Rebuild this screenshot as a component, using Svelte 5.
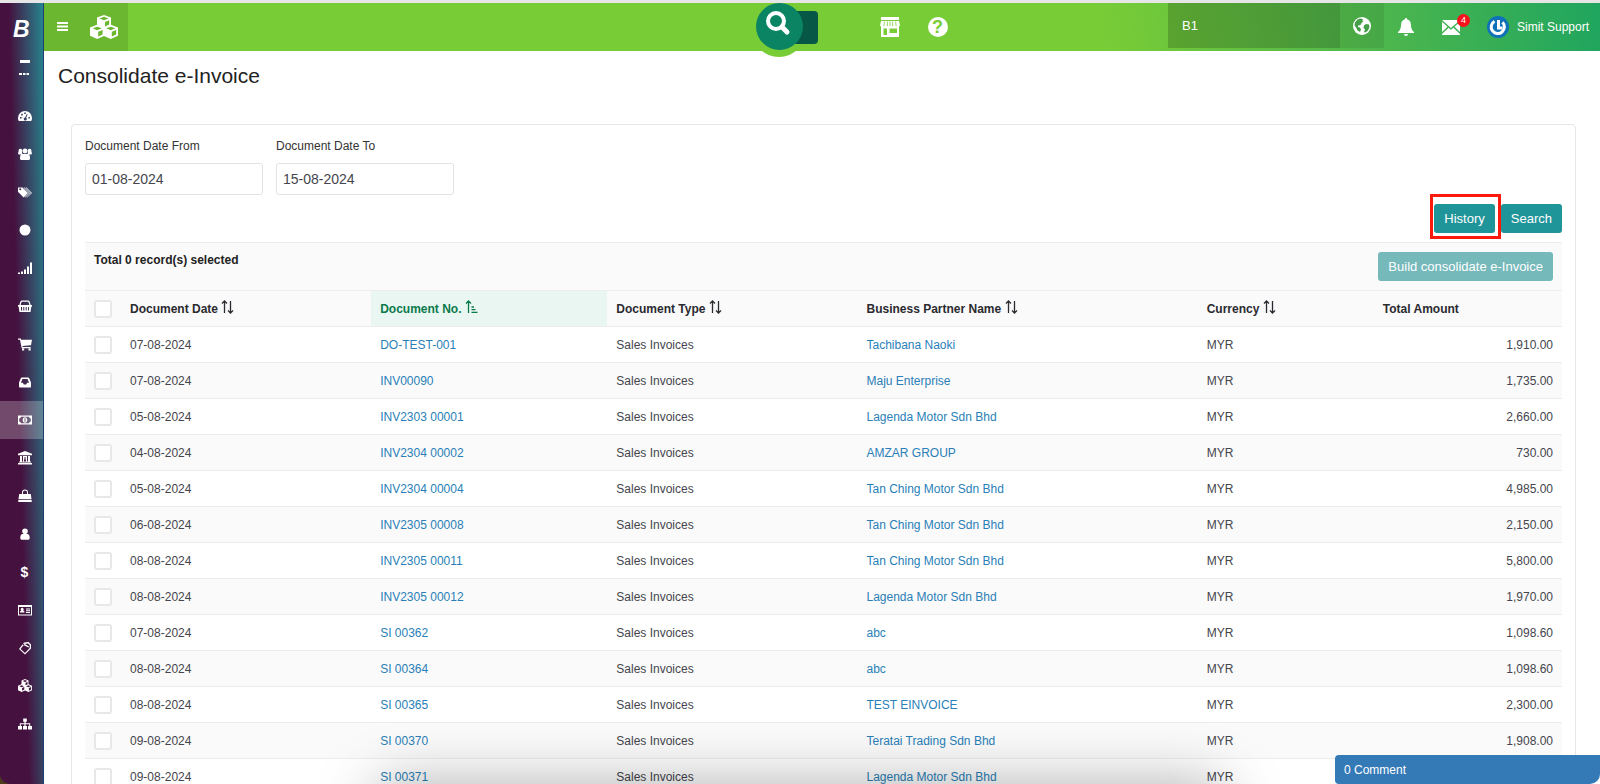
<script lang="ts">
  interface Invoice {
    date: string;
    no: string;
    partner: string;
    amount: string;
  }

  interface Column {
    label: string;
    width: number;
    sort: "none" | "both" | "asc";
  }

  let dateFrom: string = "01-08-2024";
  let dateTo: string = "15-08-2024";
  let branch: string = "B1";
  let selected: string[] = [];

  const columns: Column[] = [
    { label: "Document Date", width: 250, sort: "both" },
    { label: "Document No.", width: 236, sort: "asc" },
    { label: "Document Type", width: 250, sort: "both" },
    { label: "Business Partner Name", width: 340, sort: "both" },
    { label: "Currency", width: 176, sort: "both" },
    { label: "Total Amount", width: 188, sort: "none" },
  ];

  const invoices: Invoice[] = [
    { date: "07-08-2024", no: "DO-TEST-001", partner: "Tachibana Naoki", amount: "1,910.00" },
    { date: "07-08-2024", no: "INV00090", partner: "Maju Enterprise", amount: "1,735.00" },
    { date: "05-08-2024", no: "INV2303 00001", partner: "Lagenda Motor Sdn Bhd", amount: "2,660.00" },
    { date: "04-08-2024", no: "INV2304 00002", partner: "AMZAR GROUP", amount: "730.00" },
    { date: "05-08-2024", no: "INV2304 00004", partner: "Tan Ching Motor Sdn Bhd", amount: "4,985.00" },
    { date: "06-08-2024", no: "INV2305 00008", partner: "Tan Ching Motor Sdn Bhd", amount: "2,150.00" },
    { date: "08-08-2024", no: "INV2305 00011", partner: "Tan Ching Motor Sdn Bhd", amount: "5,800.00" },
    { date: "08-08-2024", no: "INV2305 00012", partner: "Lagenda Motor Sdn Bhd", amount: "1,970.00" },
    { date: "07-08-2024", no: "SI 00362", partner: "abc", amount: "1,098.60" },
    { date: "08-08-2024", no: "SI 00364", partner: "abc", amount: "1,098.60" },
    { date: "08-08-2024", no: "SI 00365", partner: "TEST EINVOICE", amount: "2,300.00" },
    { date: "09-08-2024", no: "SI 00370", partner: "Teratai Trading Sdn Bhd", amount: "1,908.00" },
    { date: "09-08-2024", no: "SI 00371", partner: "Lagenda Motor Sdn Bhd", amount: "" },
  ];

  const cubes =
    "M7 0l3.500 1.400v3.900l3.500 1.500v4.400l-3.600 1.800L7 11.400 3.600 13 0 11.200V6.800l3.500-1.500V1.400zM7 1L4.700 1.900 7 2.900l2.300-1zM7.500 3.800v2.400l2.100-1V2.900zM3.600 6.300L1.300 7.200l2.300 1 2.300-1zM4.100 9.100v2.600L6.300 10.600V8.100zM10.400 6.300l-2.300.9 2.300 1 2.300-1zM10.900 9.100v2.600l2.200-1.100V8.100z";

  // 14x14 glyphs, cut-outs come from the even-odd fill
  const menu = [
    { name: "Dashboard", d: "M7 2a7 7 0 0 0-7 7c0 1.200.3 2.200.8 3h12.400c.5-.8.8-1.800.8-3a7 7 0 0 0-7-7zM2 8h1.600v1.600H2zM3.200 4.800h1.600v1.600H3.200zM6.200 3.400h1.600V5H6.200zM10.400 8H12v1.600h-1.600zM8.600 5.200l1 .4-1.400 3.200a1.500 1.500 0 1 1-1-.3z" },
    { name: "Partners", d: "M4.500 4a2.500 2.500 0 1 1 5 0 2.500 2.500 0 0 1-5 0zM.7 3a1.800 1.800 0 1 1 3.300 1.500C4 5.500 4.300 6 4.600 6.500L3 7.500H.8C-.2 7 0 5.500.5 5zM13.300 3A1.800 1.800 0 1 0 10 4.500c0 1-.3 1.500-.6 2l1.600 1h2.200c1-.5.8-2 .3-2.500zM4.500 7h5c2 0 2.500 2 2.500 4s-.8 2-2 2H4c-1.200 0-2 0-2-2s.5-4 2.500-4z" },
    { name: "Tags", d: "M0 2.500v4.300L5.600 12.400 10 8 4.500 2.500zM1.200 4.200a1 1 0 1 1 2 0 1 1 0 0 1-2 0zM5.500 2.500L11 8l-4.300 4.300.6.200L12 8 6.500 2.500zM7.500 2.500L13 8l-4.500 4.500h.7L14 8 8.500 2.500z" },
    { name: "Items", d: "M7 1.500a5.500 5.500 0 1 1 0 11 5.500 5.500 0 0 1 0-11z" },
    { name: "Reports", d: "M0 11.500h2V13H0zM3 10.500h2V13H3zM6 8.500h2V13H6zM9 5.500h2V13H9zM12 1.500h2V13h-2z" },
    { name: "Purchase", d: "M4.500 1.500h5c1.500 0 2 .5 2.400 1.800l.7 2.700H14v1.500h-.6L12.500 13h-11L.6 7.500H0V6h1.400l.7-2.700C2.500 2 3 1.500 4.500 1.500zM4.500 2.700c-.8 0-1 .3-1.200 1L2.700 6h8.600l-.6-2.300c-.2-.7-.4-1-1.200-1zM3 8v3.500h1V8zM5.300 8v3.500h1V8zM7.700 8v3.500h1V8zM10 8v3.500h1V8z" },
    { name: "Sales", d: "M0 1.500h2.800l.4 1.300H14l-1 5.400-8.600.8.300 1h8v1.200h-9L2 2.800H0zM4 11.500h2.200v2H4zM10.500 11.500h2.200v2h-2.200z" },
    { name: "Inbox", d: "M4 2.500h6c.7 0 1 .3 1.300 1l1.700 4v4.200c0 .5-.3.800-.8.800H1.800c-.5 0-.8-.3-.8-.8V7.500l1.700-4c.3-.7.6-1 1.300-1zM4.500 4L2.900 7.800h2l.9 1.600h2.400l.9-1.600h2L9.500 4z" },
    { name: "Cash", d: "M0 2.500h14v9H0zM3 3.700A2 2 0 0 1 1.200 5.500v3A2 2 0 0 1 3 10.300h8a2 2 0 0 1 1.800-1.800v-3A2 2 0 0 1 11 3.700zM7 4.200c1.500 0 2.300 1.300 2.300 2.800S8.500 9.800 7 9.800 4.700 8.500 4.700 7 5.500 4.200 7 4.200zM6.500 5.300v3.400h1V5.300z" },
    { name: "Bank", d: "M7 0l7 2.800v1.400H0V2.800zM2 5h2v5.500h1V5h4v5.500h1V5h2v5.500h1v1H1v-1h1zM6.500 6v1.500l-.7 3h2.400l-.7-3V6zM0 12h14v1.500H0z" },
    { name: "Stock", d: "M4 5V3.500a3 3 0 0 1 6 0V5h2.800l.7 5H.5l.7-5zM5 5h4V3.500a2 2 0 0 0-4 0zM.4 10.700h13.200l.2 2.300H.2z" },
    { name: "Employees", d: "M4.200 4.200a2.800 2.800 0 1 1 5.600 0 2.800 2.800 0 0 1-5.600 0zM4.300 7h5.400c1.600.4 2 2.200 2 4 0 1.200-.6 1.800-1.700 1.800H4c-1.100 0-1.700-.6-1.700-1.800 0-1.800.4-3.600 2-4z" },
    { name: "Payroll", d: "" },
    { name: "Contacts", d: "M0 2h14v10.500H0zM1 4v7.500h12V4zM2 9.500C2 8 2.800 7.600 3.200 7.500a1.500 1.500 0 1 1 2 0c.5.200 1.300.600 1.300 2zM8 5.500h4v1H8zM8 7.300h4v1H8zM8 9h4v1H8z" },
    { name: "Loyalty", d: "M6 1.500L10.500 1 13 3.500v4L7 13.500 1 8zM6.500 2.900L2.600 8 7 12l4.700-5V4L10 2.400zM4.500 3.600L6 2.500l5 3-.6 1z" },
    { name: "Assets", d: cubes },
    { name: "Organisation", d: "M5.200 1.500h3.600v3.300H7.600v1.400h4.600V9H14v3.500h-4V9h1.200V7.200H7.600V9H9v3.500H5V9h1.400V7.200H2.800V9H4v3.500H0V9h1.800V6.200h4.600V4.800H5.200z" },
  ];
</script>

<div class="app">
  <nav class="sidebar" aria-label="Modules">
    <a class="logo" href="/" aria-label="Home">
      <svg width="26" height="24" viewBox="0 0 26 24">
        <text x="4" y="20" class="logo-letter">B</text>
        <circle cx="11" cy="15" r="2" fill="#32304f" />
      </svg>
    </a>
    <div class="marks">
      <svg width="12" height="18" viewBox="0 0 12 18" fill="#fff">
        <path d="M1 1h10v3H1zM0 14h3v2H0zM4 14h2.500v2H4zM7.500 14H10v2H7.500z" />
      </svg>
    </div>
    {#each menu as entry (entry.name)}
      <a href="#{entry.name}" class="entry" class:active={entry.name === "Cash"} aria-label={entry.name}>
        {#if entry.d}
          <svg width="14" height="14" viewBox="0 0 14 14" fill="#fff" fill-rule="evenodd"><path d={entry.d} /></svg>
        {:else}
          <b>$</b>
        {/if}
      </a>
    {/each}
  </nav>

  <div class="page">
    <header class="topbar">
      <div class="brand">
        <button class="icon-button" aria-label="Toggle menu">
          <svg width="11" height="10" viewBox="0 0 11 10" fill="#fff"><path d="M0 0h11v2H0zM0 3.500h11v2H0zM0 7h11v2H0z" /></svg>
        </button>
        <a href="#apps" aria-label="Apps">
          <svg width="28" height="24" viewBox="0 0 14 13" preserveAspectRatio="none" fill="#fff" fill-rule="evenodd"><path d={cubes} /></svg>
        </a>
      </div>
      <div class="space-left"></div>
      <div class="search">
        <button class="search-button" aria-label="Search">
          <svg width="26" height="26" viewBox="0 0 26 26" fill="none" stroke="#fff" stroke-width="4">
            <circle cx="11" cy="10" r="8" />
            <path d="M17 16l5 5" stroke-width="5" stroke-linecap="round" />
          </svg>
        </button>
      </div>
      <button class="icon-button store" aria-label="Store">
        <svg width="20" height="20" viewBox="0 0 20 20" fill="#fff" fill-rule="evenodd">
          <path d="M1 0h18v3H1zM1 4h18l1 4.500-1 1V20H1V9.500l-1-1zM4 4.500L3.500 9h.8l.4-4.500zM7 4.500L6.800 9h.9V4.500zM12.300 4.500V9h.9L13 4.500zM9.600 4.500V9h.8V4.500zM15.300 4.500l.4 4.500h.8L16 4.500zM3.500 11.500V18H7v-6.500zM9.500 11.500V16H17v-4.500z" />
        </svg>
      </button>
      <button class="icon-button help" aria-label="Help">?</button>
      <div class="space-right"></div>
      <input class="branch" aria-label="Branch" bind:value={branch} />
      <button class="icon-button globe" aria-label="Language">
        <svg width="18" height="18" viewBox="0 0 18 18">
          <circle cx="9" cy="9" r="9" fill="#fff" />
          <path fill="#459f49" d="M7 1.500l3 .5-.8 1.500 1.300.5L8.500 6l-1 2-2.300.500L5 10l2 .5 1 2-1 2.500L4 13l-.5-2L1.500 8.500 2 5.500l2.500-3zM13 7l3 .5.5 2.500-1.500 3.500-2.500 2-1.500-.5 1-2.500-1.500-1.500.5-2.500z" />
        </svg>
      </button>
      <button class="icon-button bell" aria-label="Notifications">
        <svg width="16" height="19" viewBox="0 0 16 19" fill="#fff">
          <path d="M8 0c.8 0 1 .5 1 1.300 2.500.6 3.800 2.400 3.900 5.200.1 3.800 1 6 3.100 7.500V15H0v-1c2.100-1.500 3-3.700 3.100-7.500C3.200 3.700 4.500 1.900 7 1.300 7 .5 7.200 0 8 0zM6 16h4a2 2 0 0 1-4 0z" />
        </svg>
      </button>
      <button class="icon-button mail" aria-label="Messages">
        <svg width="18" height="15" viewBox="0 0 18 15" fill="#fff">
          <path d="M0 0h18L9 8zM0 1.800L5.500 6.800 0 12zM18 1.800V12l-5.500-5.200zM6.600 7.700L9 9.800l2.400-2.100L18 14v1H0v-1z" />
        </svg>
        <span class="badge">4</span>
      </button>
      <button class="icon-button user">
        <svg width="22" height="22" viewBox="0 0 22 22" fill="none">
          <circle cx="11" cy="11" r="11" fill="#0f72b8" />
          <path d="M7.500 5.200A6.600 6.600 0 1 0 15.500 6.300" stroke="#fff" stroke-width="3" />
          <path d="M11.500 4v8h4" stroke="#fff" stroke-width="3" />
        </svg>
        <span>Simit Support</span>
      </button>
    </header>

    <main>
      <h1>Consolidate e-Invoice</h1>

      <section class="card">
        <div class="filters">
          <div class="field">
            <label for="date-from">Document Date From</label>
            <input id="date-from" type="text" bind:value={dateFrom} />
          </div>
          <div class="field">
            <label for="date-to">Document Date To</label>
            <input id="date-to" type="text" bind:value={dateTo} />
          </div>
        </div>

        <div class="actions">
          <button class="btn highlight">History</button>
          <button class="btn">Search</button>
        </div>

        <div class="toolbar">
          <strong>Total {selected.length} record(s) selected</strong>
          <button class="btn" disabled={selected.length === 0}>Build consolidate e-Invoice</button>
        </div>

        <table>
          <colgroup>
            <col class="check-col" />
            {#each columns as column (column.label)}
              <col style="width: {column.width}px" />
            {/each}
          </colgroup>
          <thead>
            <tr>
              <th><input type="checkbox" aria-label="Select all" /></th>
              {#each columns as column (column.label)}
                <th class:sorted={column.sort === "asc"}>
                  {column.label}
                  {#if column.sort === "both"}
                    <svg class="sort" width="13" height="14" viewBox="0 0 13 14" fill="none" stroke="currentColor" stroke-width="1.300">
                      <path d="M3.500 13V1M1 3.500L3.500 1 6 3.500M9.500 1v12M7 10.500L9.500 13l2.500-2.500" />
                    </svg>
                  {:else if column.sort === "asc"}
                    <svg class="sort" width="13" height="14" viewBox="0 0 13 14" fill="none" stroke="currentColor" stroke-width="1.300">
                      <path d="M3.500 13V1M1 3.500L3.500 1 6 3.500M6.500 7H9M6.500 9.700h4M6.500 12.400h6" />
                    </svg>
                  {/if}
                </th>
              {/each}
            </tr>
          </thead>
          <tbody>
            {#each invoices as invoice (invoice.no)}
              <tr>
                <td><input type="checkbox" value={invoice.no} bind:group={selected} aria-label="Select {invoice.no}" /></td>
                <td>{invoice.date}</td>
                <td><a href="#{invoice.no}">{invoice.no}</a></td>
                <td>Sales Invoices</td>
                <td><a href="#{invoice.partner}">{invoice.partner}</a></td>
                <td>MYR</td>
                <td class="amount">{invoice.amount}</td>
              </tr>
            {/each}
          </tbody>
        </table>
      </section>
    </main>
  </div>

  <div class="shade"></div>
  <button class="comments">0 Comment</button>
</div>

<style>
  :global(body) {
    background: #4c3c1c;
  }

  .app {
    display: flex;
    height: 100vh;
    overflow: hidden;
    box-sizing: border-box;
    border-top: 3px solid #e6e6e6;
    position: relative;
    font-family: "Liberation Sans", Arial, sans-serif;
    font-size: 12px;
    line-height: 16px;
    color: #45454d;
  }

  .app :global(*) {
    box-sizing: border-box;
  }

  svg {
    display: block;
    flex: none;
  }

  button,
  input {
    font-family: inherit;
  }

  .icon-button {
    display: flex;
    align-items: center;
    padding: 0;
    border: none;
    background: none;
    color: #fff;
    cursor: pointer;
  }

  /* sidebar */
  .sidebar {
    flex: none;
    width: 44px;
    border-right: 1px solid #1c3f70;
    border-bottom-left-radius: 10px;
    background: linear-gradient(88.5deg, #45123f 46%, #26858f 100%);
    overflow: hidden;
  }

  .logo {
    display: flex;
    justify-content: center;
    padding-top: 14px;
  }

  .logo-letter {
    font-size: 23px;
    font-weight: 700;
    font-style: italic;
    fill: #fff;
  }

  .marks {
    display: flex;
    justify-content: center;
    height: 56px;
    padding: 18px 0 0 6px;
  }

  .entry {
    display: flex;
    align-items: center;
    justify-content: center;
    height: 38px;
    padding-left: 6px;
    color: #fff;
    text-decoration: none;
    font-size: 14px;
  }

  .entry.active {
    background: rgba(255, 255, 255, 0.24);
  }

  .page {
    flex: 1;
    min-width: 0;
    background: #fff;
  }

  /* topbar */
  .topbar {
    display: flex;
    align-items: center;
    height: 48px;
    position: relative;
    background: linear-gradient(80deg, #78cc36 68%, #4cb64d 86%, #1fa55f 100%);
  }

  .brand {
    display: flex;
    align-items: center;
    align-self: stretch;
    gap: 22px;
    width: 84px;
    padding-left: 13px;
    background: rgba(0, 0, 0, 0.1);
  }

  .space-left {
    flex: 74;
  }

  .space-right {
    flex: 26;
  }

  .search {
    position: relative;
    z-index: 1;
    width: 62px;
    height: 48px;
  }

  .search::before {
    content: "";
    position: absolute;
    left: -4px;
    top: 0;
    width: 54px;
    height: 54px;
    border-radius: 50%;
    background: #78cc36;
  }

  .search::after {
    content: "";
    position: absolute;
    right: 0;
    top: 8px;
    width: 40px;
    height: 33px;
    border-radius: 4px;
    background: #065746;
  }

  .search-button {
    display: flex;
    justify-content: center;
    position: relative;
    z-index: 1;
    width: 47px;
    height: 47px;
    padding: 8px 2px 0 0;
    border: none;
    border-radius: 50%;
    background: #0a8462;
    cursor: pointer;
  }

  .store {
    margin: 0 28px 0 62px;
  }

  .help {
    justify-content: center;
    width: 20px;
    height: 20px;
    border-radius: 50%;
    background: #fff;
    color: #78cc36;
    font-size: 18px;
    font-weight: 700;
  }

  .branch {
    align-self: flex-start;
    width: 172px;
    height: 45px;
    padding: 0 14px;
    border: none;
    border-radius: 0;
    background: rgba(0, 0, 0, 0.18);
    color: #fff;
    font-size: 13px;
  }

  .globe {
    align-self: flex-start;
    justify-content: center;
    width: 44px;
    height: 45px;
    background: rgba(0, 0, 0, 0.08);
  }

  .bell {
    margin-left: 14px;
  }

  .mail {
    position: relative;
    margin-left: 28px;
  }

  .badge {
    position: absolute;
    left: 15px;
    top: -6px;
    width: 13px;
    height: 13px;
    border-radius: 50%;
    background: #f8121c;
    font-size: 9px;
    line-height: 13px;
    text-align: center;
  }

  .user {
    gap: 8px;
    margin: 0 11px 0 27px;
    font-size: 12px;
    white-space: nowrap;
  }

  /* content */
  h1 {
    margin: 0;
    padding: 11px 14px 34px;
    font-size: 21px;
    line-height: 28px;
    font-weight: 400;
    color: #222;
  }

  .card {
    margin: 0 24px 0 27px;
    padding: 13px;
    border: 1px solid #e4e6e8;
    border-radius: 4px;
  }

  .filters {
    display: flex;
    gap: 13px;
  }

  .field {
    display: flex;
    flex-direction: column;
    gap: 9px;
    width: 178px;
  }

  .field label {
    color: #333;
  }

  .field input {
    width: 100%;
    height: 32px;
    padding: 0 6px;
    border: 1px solid #e1e3e6;
    border-radius: 3px;
    color: #45454d;
    font-size: 14px;
  }

  .actions {
    display: flex;
    justify-content: flex-end;
    gap: 6px;
    margin: 9px 0;
  }

  .btn {
    position: relative;
    height: 29px;
    padding: 0 10px;
    border: none;
    border-radius: 3px;
    background: #1f9499;
    color: #fff;
    font-size: 13px;
    cursor: pointer;
  }

  .btn:disabled {
    background: #76b9bb;
    cursor: default;
  }

  .highlight::after {
    content: "";
    position: absolute;
    inset: -10px -6px -6px -4px;
    border: 3px solid #fb1a0c;
  }

  .toolbar {
    display: flex;
    justify-content: space-between;
    align-items: flex-start;
    height: 48px;
    padding: 9px;
    border-top: 1px solid #eee;
    background: #fafafa;
    color: #222;
  }

  table {
    width: 100%;
    table-layout: fixed;
    border-collapse: collapse;
  }

  .check-col {
    width: 36px;
  }

  th,
  td {
    height: 36px;
    padding: 0 9px;
    border-top: 1px solid #ededed;
    text-align: left;
    white-space: nowrap;
  }

  th {
    background: #fafafa;
    color: #2a2a30;
  }

  th.sorted {
    background: #eaf6f2;
    color: #0b7a4b;
  }

  .sort {
    display: inline-block;
    vertical-align: -1px;
  }

  tbody tr:nth-child(even) {
    background: #fafafa;
  }

  td a {
    color: #2a7fb8;
    text-decoration: none;
  }

  .amount {
    text-align: right;
  }

  input[type="checkbox"] {
    appearance: none;
    display: block;
    width: 18px;
    height: 18px;
    margin: 0;
    border: 2px solid #e8e8e8;
    border-radius: 3px;
    background: #fff;
  }

  input[type="checkbox"]:checked {
    background: #1f9499;
  }

  .shade {
    position: absolute;
    left: 24%;
    right: 24%;
    bottom: -40px;
    height: 30px;
    box-shadow: 0 0 60px 6px rgba(0, 0, 0, 0.4);
    pointer-events: none;
  }

  .comments {
    position: absolute;
    right: 0;
    bottom: 0;
    width: 265px;
    height: 29px;
    padding: 0 9px;
    border: none;
    border-radius: 4px 0 10px 4px;
    background: #337ab7;
    color: #fff;
    font-size: 12px;
    text-align: left;
    cursor: pointer;
  }
</style>
